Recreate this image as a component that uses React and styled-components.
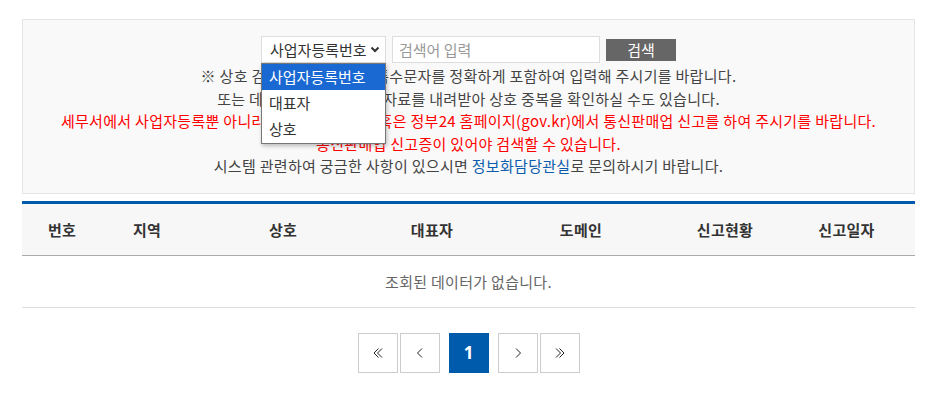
import React from 'react'
import styled, { createGlobalStyle } from 'styled-components'

const GlobalStyle = createGlobalStyle`
  html, body {
    margin: 0;
    padding: 0;
    background: #fff;
    font-family: "Noto Sans CJK KR", "Noto Sans", sans-serif;
    letter-spacing: 0.3px;
  }
`

const Page = styled.div`
  padding: 19px 17px 0 22px;
  width: 893px;
`

const SearchBox = styled.div`
  background: #f9f9f9;
  border: 1px solid #e5e5e5;
  padding: 16px 0 15px;
  display: flex;
  flex-direction: column;
  align-items: center;
`

const SearchRow = styled.div`
  display: flex;
  align-items: center;
  gap: 6px;
  margin-bottom: 2px;
`

const SelectWrap = styled.div`
  position: relative;
`

const SelectBox = styled.div`
  width: 125px;
  height: 27px;
  box-sizing: border-box;
  border: 1px solid #ddd;
  background: #fff;
  display: flex;
  align-items: center;
  justify-content: space-between;
  padding: 0 5px 0 8px;
  font-size: 15px;
  letter-spacing: 0;
  color: #333;
`

const Dropdown = styled.ul`
  position: absolute;
  top: 27px;
  left: 0;
  width: 125px;
  box-sizing: border-box;
  margin: 0;
  padding: 0 0 1px;
  list-style: none;
  background: #fff;
  border: 1px solid #767676;
  box-shadow: 1px 2px 4px rgba(0, 0, 0, 0.25);
  z-index: 5;
`

const Option = styled.li`
  height: 26px;
  line-height: 26px;
  padding-left: 7px;
  font-size: 15px;
  letter-spacing: 0;
  color: ${p => (p.$active ? '#fff' : '#333')};
  background: ${p => (p.$active ? '#1a68d2' : 'transparent')};
`

const Input = styled.input`
  width: 208px;
  height: 27px;
  box-sizing: border-box;
  border: 1px solid #ddd;
  padding: 0 6px;
  font-family: inherit;
  font-size: 15px;
  color: #333;
  outline: none;
  &::placeholder {
    color: #999;
  }
`

const SearchButton = styled.button`
  width: 70px;
  height: 22px;
  border: none;
  background: #666;
  color: #fff;
  font-family: inherit;
  font-size: 15px;
  padding: 0;
  cursor: pointer;
`

const Notice = styled.p`
  margin: 0;
  font-size: 15px;
  line-height: 22.5px;
  text-align: center;
  color: ${p => (p.$red ? '#ff0000' : '#444')};
`

const Link = styled.a`
  color: #0b5cad;
  text-decoration: none;
`

const Table = styled.table`
  width: 100%;
  margin-top: 7px;
  border-collapse: collapse;
  border-top: 3px solid #005bac;
  table-layout: fixed;
`

const Th = styled.th`
  height: 51px;
  background: #f7f7f7;
  border-bottom: 1px solid #aaa;
  font-size: 15px;
  font-weight: 700;
  color: #333;
  text-align: center;
  padding: 0;
`

const EmptyCell = styled.td`
  height: 51px;
  border-bottom: 1px solid #ddd;
  font-size: 15px;
  color: #666;
  text-align: center;
  padding: 0;
`

const Pager = styled.div`
  display: flex;
  justify-content: center;
  gap: 2px;
  margin-top: 25px;
`

const PageButton = styled.button`
  width: 40px;
  height: 40px;
  box-sizing: border-box;
  padding: 0;
  display: flex;
  align-items: center;
  justify-content: center;
  background: ${p => (p.$active ? '#005bac' : '#fff')};
  border: 1px solid ${p => (p.$active ? '#005bac' : '#ccc')};
  color: ${p => (p.$active ? '#fff' : '#333')};
  margin: ${p => (p.$active ? '0 7px' : '0')};
  font-family: "Noto Sans", sans-serif;
  font-size: 17px;
  font-weight: 700;
  cursor: pointer;
`

const Chevron = () => (
  <svg width="10" height="7" viewBox="0 0 10 7">
    <polyline points="1.5,1.5 5,5 8.5,1.5" fill="none" stroke="#333" strokeWidth="2" />
  </svg>
)

const Arrow = ({ dir, double }) => {
  const flip = dir === 'left' ? 'scale(-1,1) translate(-12,0)' : undefined
  return (
    <svg width="12" height="12" viewBox="0 0 12 12">
      <g transform={flip} fill="none" stroke="#222" strokeWidth="1">
        {double ? (
          <>
            <polyline points="2,1.5 6.5,6 2,10.5" />
            <polyline points="5.5,1.5 10,6 5.5,10.5" />
          </>
        ) : (
          <polyline points="4,1.5 8.5,6 4,10.5" />
        )}
      </g>
    </svg>
  )
}

const columns = [
  { label: '번호', width: 80 },
  { label: '지역', width: 90 },
  { label: '상호', width: 182 },
  { label: '대표자', width: 116 },
  { label: '도메인', width: 182 },
  { label: '신고현황', width: 106 },
  { label: '신고일자', width: 137 },
]

const options = ['사업자등록번호', '대표자', '상호']

export default function App() {
  return (
    <Page>
      <GlobalStyle />
      <SearchBox>
        <SearchRow>
          <SelectWrap>
            <SelectBox>
              <span>사업자등록번호</span>
              <Chevron />
            </SelectBox>
            <Dropdown>
              {options.map((o, i) => (
                <Option key={o} $active={i === 0}>{o}</Option>
              ))}
            </Dropdown>
          </SelectWrap>
          <Input placeholder="검색어 입력" />
          <SearchButton>검색</SearchButton>
        </SearchRow>
        <Notice>※ 상호 검색 시 띄어쓰기와 특수문자를 정확하게 포함하여 입력해 주시기를 바랍니다.</Notice>
        <Notice>또는 데이터개방 메뉴에서 자료를 내려받아 상호 중복을 확인하실 수도 있습니다.</Notice>
        <Notice $red>세무서에서 사업자등록뿐 아니라 해당 시·군·구청 혹은 정부24 홈페이지(gov.kr)에서 통신판매업 신고를 하여 주시기를 바랍니다.</Notice>
        <Notice $red>통신판매업 신고증이 있어야 검색할 수 있습니다.</Notice>
        <Notice>시스템 관련하여 궁금한 사항이 있으시면 <Link href="#">정보화담당관실</Link>로 문의하시기 바랍니다.</Notice>
      </SearchBox>

      <Table>
        <colgroup>
          {columns.map(c => <col key={c.label} style={{ width: c.width }} />)}
        </colgroup>
        <thead>
          <tr>
            {columns.map(c => <Th key={c.label}>{c.label}</Th>)}
          </tr>
        </thead>
        <tbody>
          <tr>
            <EmptyCell colSpan={columns.length}>조회된 데이터가 없습니다.</EmptyCell>
          </tr>
        </tbody>
      </Table>

      <Pager>
        <PageButton><Arrow dir="left" double /></PageButton>
        <PageButton><Arrow dir="left" /></PageButton>
        <PageButton $active>1</PageButton>
        <PageButton><Arrow dir="right" /></PageButton>
        <PageButton><Arrow dir="right" double /></PageButton>
      </Pager>
    </Page>
  )
}
